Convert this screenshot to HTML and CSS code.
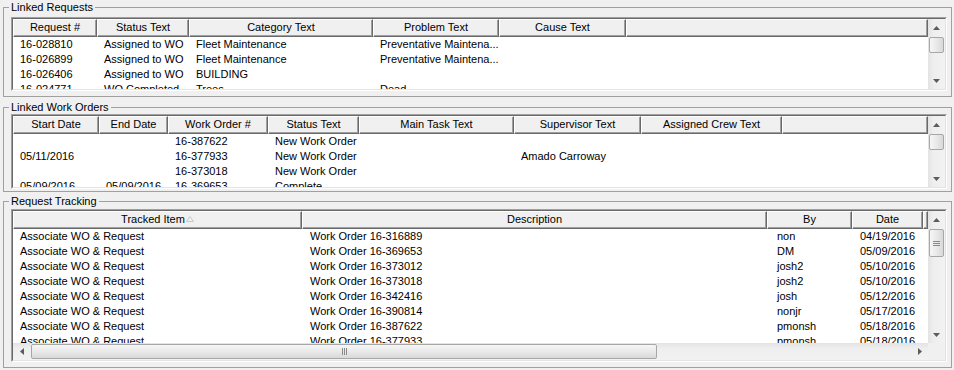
FILE: index.html
```html
<!DOCTYPE html>
<html>
<head>
<meta charset="utf-8">
<link rel="stylesheet" href="styles.css">
</head>
<body>
<div class="page">
  <fieldset class="group g1">
    <legend>Linked Requests</legend>
    <div class="list lv1">
      <div class="list-in">
        <div class="view">
          <div class="hdr cols1">
            <div class="hc">Request #</div><div class="hc">Status Text</div><div class="hc">Category Text</div><div class="hc">Problem Text</div><div class="hc">Cause Text</div><div class="hc"></div>
          </div>
          <div class="row cols1"><span>16-028810</span><span>Assigned to WO</span><span>Fleet Maintenance</span><span>Preventative Maintena...</span><span></span><span></span></div>
          <div class="row cols1"><span>16-026899</span><span>Assigned to WO</span><span>Fleet Maintenance</span><span>Preventative Maintena...</span><span></span><span></span></div>
          <div class="row cols1"><span>16-026406</span><span>Assigned to WO</span><span>BUILDING</span><span></span><span></span><span></span></div>
          <div class="row cols1"><span>16-024771</span><span>WO Completed</span><span>Trees</span><span>Dead</span><span></span><span></span></div>
        </div>
        <div class="vs">
          <div class="arr"><svg width="7" height="4" viewBox="0 0 7 4"><polygon points="3.5,0 7,4 0,4" class="tri"/></svg></div>
          <div class="thumb-v t1"></div>
          <div class="fill"></div>
          <div class="arr"><svg width="7" height="4" viewBox="0 0 7 4"><polygon points="0,0 7,0 3.5,4" class="tri"/></svg></div>
        </div>
      </div>
    </div>
  </fieldset>

  <fieldset class="group g2">
    <legend>Linked Work Orders</legend>
    <div class="list lv2">
      <div class="list-in">
        <div class="view">
          <div class="hdr cols2">
            <div class="hc">Start Date</div><div class="hc">End Date</div><div class="hc">Work Order #</div><div class="hc">Status Text</div><div class="hc">Main Task Text</div><div class="hc">Supervisor Text</div><div class="hc">Assigned Crew Text</div><div class="hc"></div>
          </div>
          <div class="row cols2"><span></span><span></span><span>16-387622</span><span>New Work Order</span><span></span><span></span><span></span><span></span></div>
          <div class="row cols2"><span>05/11/2016</span><span></span><span>16-377933</span><span>New Work Order</span><span></span><span>Amado Carroway</span><span></span><span></span></div>
          <div class="row cols2"><span></span><span></span><span>16-373018</span><span>New Work Order</span><span></span><span></span><span></span><span></span></div>
          <div class="row cols2"><span>05/09/2016</span><span>05/09/2016</span><span>16-369653</span><span>Complete</span><span></span><span></span><span></span><span></span></div>
        </div>
        <div class="vs">
          <div class="arr"><svg width="7" height="4" viewBox="0 0 7 4"><polygon points="3.5,0 7,4 0,4" class="tri"/></svg></div>
          <div class="thumb-v t2"></div>
          <div class="fill"></div>
          <div class="arr"><svg width="7" height="4" viewBox="0 0 7 4"><polygon points="0,0 7,0 3.5,4" class="tri"/></svg></div>
        </div>
      </div>
    </div>
  </fieldset>

  <fieldset class="group g3">
    <legend>Request Tracking</legend>
    <div class="list lv3">
      <div class="list-in two">
        <div class="view">
          <div class="hdr cols3">
            <div class="hc">Tracked Item<svg class="sort" width="8" height="6" viewBox="0 0 8 6"><polygon points="4,0.5 7.5,5.5 0.5,5.5" fill="none" stroke="#c8c8c8"/></svg></div><div class="hc">Description</div><div class="hc">By</div><div class="hc">Date</div><div class="hc"></div>
          </div>
          <div class="row cols3"><span>Associate WO &amp; Request</span><span>Work Order 16-316889</span><span>non</span><span>04/19/2016</span><span></span></div>
          <div class="row cols3"><span>Associate WO &amp; Request</span><span>Work Order 16-369653</span><span>DM</span><span>05/09/2016</span><span></span></div>
          <div class="row cols3"><span>Associate WO &amp; Request</span><span>Work Order 16-373012</span><span>josh2</span><span>05/10/2016</span><span></span></div>
          <div class="row cols3"><span>Associate WO &amp; Request</span><span>Work Order 16-373018</span><span>josh2</span><span>05/10/2016</span><span></span></div>
          <div class="row cols3"><span>Associate WO &amp; Request</span><span>Work Order 16-342416</span><span>josh</span><span>05/12/2016</span><span></span></div>
          <div class="row cols3"><span>Associate WO &amp; Request</span><span>Work Order 16-390814</span><span>nonjr</span><span>05/17/2016</span><span></span></div>
          <div class="row cols3"><span>Associate WO &amp; Request</span><span>Work Order 16-387622</span><span>pmonsh</span><span>05/18/2016</span><span></span></div>
          <div class="row cols3"><span>Associate WO &amp; Request</span><span>Work Order 16-377933</span><span>pmonsh</span><span>05/18/2016</span><span></span></div>
        </div>
        <div class="vs">
          <div class="arr"><svg width="7" height="4" viewBox="0 0 7 4"><polygon points="3.5,0 7,4 0,4" class="tri"/></svg></div>
          <div class="thumb-v t3">
            <svg width="7" height="7" viewBox="0 0 7 7"><path d="M0 1.5H7M0 3.5H7M0 5.5H7" stroke="#8a8a8a" stroke-width="1"/></svg>
          </div>
          <div class="fill"></div>
          <div class="arr"><svg width="7" height="4" viewBox="0 0 7 4"><polygon points="0,0 7,0 3.5,4" class="tri"/></svg></div>
        </div>
        <div class="hs">
          <div class="arr-h"><svg width="4" height="7" viewBox="0 0 4 7"><polygon points="0,3.5 4,0 4,7" class="tri"/></svg></div>
          <div class="thumb-h">
            <svg width="7" height="7" viewBox="0 0 7 7"><path d="M1.5 0V7M3.5 0V7M5.5 0V7" stroke="#8a8a8a" stroke-width="1"/></svg>
          </div>
          <div class="fill"></div>
          <div class="arr-h"><svg width="4" height="7" viewBox="0 0 4 7"><polygon points="0,0 4,3.5 0,7" class="tri"/></svg></div>
        </div>
        <div class="corner"></div>
      </div>
    </div>
  </fieldset>
</div>
</body>
</html>
```

FILE: styles.css
```css
html, body {
  margin: 0;
  padding: 0;
  background: #f0f0f0;
}

body {
  font-family: "Liberation Sans", Arial, sans-serif;
  font-size: 11px;
  color: #000;
}

.page {
  display: flex;
  flex-direction: column;
  padding: 0 2px 0 3px;
}

.group {
  margin: 0;
  min-width: 0;
  border: 1px solid #a0a0a0;
}

.group legend {
  padding: 0 2px;
  margin-left: -2px;
  line-height: 14px;
  height: 14px;
}

.g1 {
  padding: 3px 4px 5px 7px;
}

.g2 {
  margin-top: 3px;
  padding: 0 4px 2px 7px;
}

.g3 {
  margin-top: 2px;
  padding: 1px 4px 5px 7px;
}

.list {
  box-sizing: border-box;
  border: 1px solid;
  border-color: #a0a0a0 #ffffff #ffffff #a0a0a0;
  background: #fff;
}

.lv1 { height: 74px; }
.lv2 { height: 75px; }
.lv3 { height: 153px; }

.list-in {
  box-sizing: border-box;
  height: 100%;
  border: 1px solid;
  border-color: #696969 #e3e3e3 #e3e3e3 #696969;
  display: grid;
  grid-template-columns: 1fr 17px;
  grid-template-rows: 100%;
}

.list-in.two {
  grid-template-rows: 1fr 17px;
}

.view {
  min-width: 0;
  min-height: 0;
  overflow: hidden;
  display: flex;
  flex-direction: column;
  background: #fff;
}

.hdr {
  display: grid;
  flex: none;
  height: 18px;
  background: #f0f0f0;
}

.hc {
  box-sizing: border-box;
  border: 1px solid;
  border-color: #ffffff #696969 #696969 #ffffff;
  box-shadow: inset -1px -1px 0 #a0a0a0;
  text-align: center;
  line-height: 15px;
  white-space: nowrap;
  overflow: hidden;
}

.hc .sort {
  margin-left: 1px;
  vertical-align: 1px;
}

.row {
  display: grid;
  flex: none;
  height: 15px;
  line-height: 15px;
}

.row span {
  padding-left: 7px;
  white-space: nowrap;
  overflow: hidden;
}

.cols1 {
  grid-template-columns: 84px 92px 184px 126px 127px 1fr;
}

.cols2 {
  grid-template-columns: 86px 69px 100px 91px 155px 127px 141px 1fr;
}

.cols3 {
  grid-template-columns: 289px 465px 85px 71px 1fr;
}

.cols3 .row span:nth-child(3),
.row.cols3 span:nth-child(3) {
  padding-left: 10px;
}

.row.cols3 span:nth-child(2),
.row.cols3 span:nth-child(4) {
  padding-left: 8px;
}

/* scrollbars */
.vs {
  display: flex;
  flex-direction: column;
  min-height: 0;
  background: linear-gradient(to right, #e3e3e3, #eeeeee 30%, #f2f2f2);
}

.arr {
  flex: none;
  height: 17px;
  display: flex;
  align-items: center;
  justify-content: center;
}

.tri {
  fill: #5c5c5c;
}

.fill {
  flex: 1;
}

.thumb-v {
  flex: none;
  box-sizing: border-box;
  margin: 0 1px;
  border: 1px solid #a7a7a7;
  border-radius: 2px;
  background: linear-gradient(to right, #f6f6f6, #e9e9e9 50%, #d9d9d9);
  display: flex;
  align-items: center;
  justify-content: center;
}

.t1 { margin-top: 1px; height: 16px; }
.t2 { margin-top: 1px; height: 16px; }
.t3 { margin-top: 1px; height: 28px; }

.hs {
  display: flex;
  min-width: 0;
  background: linear-gradient(to bottom, #e3e3e3, #eeeeee 30%, #f2f2f2);
}

.arr-h {
  flex: none;
  width: 17px;
  display: flex;
  align-items: center;
  justify-content: center;
}

.thumb-h {
  flex: none;
  box-sizing: border-box;
  width: 626px;
  margin: 1px 0 1px 1px;
  border: 1px solid #a7a7a7;
  border-radius: 2px;
  background: linear-gradient(to bottom, #f6f6f6, #e9e9e9 50%, #d9d9d9);
  display: flex;
  align-items: center;
  justify-content: center;
}

.corner {
  background: #f0f0f0;
}
```
